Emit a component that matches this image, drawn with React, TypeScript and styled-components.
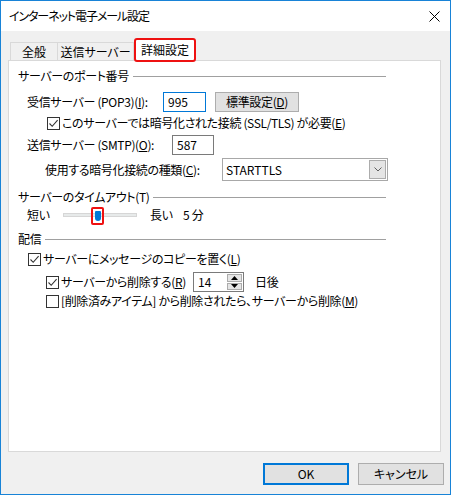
import React from "react";
import styled, { createGlobalStyle } from "styled-components";

const GlobalStyle = createGlobalStyle`
  html, body {
    margin: 0;
    padding: 0;
    background: #ffffff;
  }
  * {
    box-sizing: border-box;
  }
  body {
    font-family: "Noto Sans CJK JP", "Noto Sans", sans-serif;
    font-size: 12px;
    color: #000000;
    font-feature-settings: "palt";
    letter-spacing: -0.35px;
  }
`;

const CheckMark = () => (
  <svg width="11" height="11" viewBox="0 0 11 11">
    <path d="M1.5 5.5 L4.2 8.3 L9.6 2.2" fill="none" stroke="#333333" strokeWidth="1.1" />
  </svg>
);

const CloseIcon = () => (
  <svg width="11" height="11" viewBox="0 0 11 11">
    <path d="M0.5 0.5 L10.5 10.5 M10.5 0.5 L0.5 10.5" stroke="#000000" strokeWidth="1" />
  </svg>
);

const ChevronDown = () => (
  <svg width="8" height="5" viewBox="0 0 8 5">
    <path d="M0.5 0.5 L4 4 L7.5 0.5" fill="none" stroke="#606060" strokeWidth="1" />
  </svg>
);

const Arrow = ({ up }: { up?: boolean }) => (
  <svg width="7" height="4" viewBox="0 0 7 4">
    <path d={up ? "M0 4 L3.5 0 L7 4 Z" : "M0 0 L3.5 4 L7 0 Z"} fill="#000000" />
  </svg>
);

const App = () => {
  return (
    <>
      <GlobalStyle />
      <Window>
        <TitleBar>
          <TitleText>インターネット電子メール設定</TitleText>
          <CloseButton>
            <CloseIcon />
          </CloseButton>
        </TitleBar>
        <Body>
          <TabStrip>
            <Tab $w={48}>全般</Tab>
            <Tab $w={77}>送信サーバー</Tab>
            <ActiveTab>詳細設定</ActiveTab>
          </TabStrip>
          <Panel>
            <GroupHeader>
              <span>サーバーのポート番号</span>
              <HeaderLine />
            </GroupHeader>
            <Row $h={20} $mt={8} $indent={18}>
              <Label $w={136}>
                受信サーバー (POP3)(<u>I</u>):
              </Label>
              <TextBox $w={43} $focused>
                995
              </TextBox>
              <PushButton>
                標準設定(<u>D</u>)
              </PushButton>
            </Row>
            <Row $h={16} $mt={3} $indent={38}>
              <CheckBox>
                <CheckMark />
              </CheckBox>
              <CheckText>
                このサーバーでは暗号化された接続 (SSL/TLS) が必要(<u>E</u>)
              </CheckText>
            </Row>
            <Row $h={20} $mt={4} $indent={18}>
              <Label $w={145}>
                送信サーバー (SMTP)(<u>O</u>):
              </Label>
              <TextBox $w={42}>587</TextBox>
            </Row>
            <Row $h={23} $mt={3} $indent={36}>
              <Label $w={177}>
                使用する暗号化接続の種類(<u>C</u>):
              </Label>
              <Select>
                <SelectValue>STARTTLS</SelectValue>
                <DropButton>
                  <ChevronDown />
                </DropButton>
              </Select>
            </Row>

            <GroupHeader $mt={8}>
              <span>サーバーのタイムアウト(T)</span>
              <HeaderLine />
            </GroupHeader>
            <Row $h={20} $indent={18}>
              <Label $w={36}>短い</Label>
              <Slider>
                <Track />
                <ThumbHighlight>
                  <Thumb />
                </ThumbHighlight>
              </Slider>
              <Label $w={33} $ml={13}>
                長い
              </Label>
              <span>5 分</span>
            </Row>

            <GroupHeader $mt={6}>
              <span>配信</span>
              <HeaderLine />
            </GroupHeader>
            <Row $h={16} $mt={4} $indent={19}>
              <CheckBox>
                <CheckMark />
              </CheckBox>
              <CheckText>
                サーバーにメッセージのコピーを置く(<u>L</u>)
              </CheckText>
            </Row>
            <Row $h={20} $mt={5} $indent={37}>
              <CheckBox>
                <CheckMark />
              </CheckBox>
              <CheckText $w={132}>
                サーバーから削除する(<u>R</u>)
              </CheckText>
              <SpinBox>
                <SpinValue>14</SpinValue>
                <SpinButtons>
                  <SpinButton>
                    <Arrow up />
                  </SpinButton>
                  <SpinButton>
                    <Arrow />
                  </SpinButton>
                </SpinButtons>
              </SpinBox>
              <Label $ml={11}>日後</Label>
            </Row>
            <Row $h={16} $mt={1} $indent={37}>
              <CheckBox />
              <CheckText>
                [削除済みアイテム] から削除されたら、サーバーから削除(<u>M</u>)
              </CheckText>
            </Row>
          </Panel>
          <Footer>
            <DialogButton $default>OK</DialogButton>
            <DialogButton>キャンセル</DialogButton>
          </Footer>
        </Body>
      </Window>
    </>
  );
};

export default App;

const Window = styled.div`
  width: 451px;
  height: 495px;
  border: 1px solid #1883d7;
  display: flex;
  flex-direction: column;
  background: #f0f0f0;
`;
const TitleBar = styled.div`
  height: 30px;
  flex-shrink: 0;
  display: flex;
  align-items: center;
  justify-content: space-between;
  padding-left: 8px;
  background: #ffffff;
`;
const TitleText = styled.div`
  font-size: 12px;
  line-height: 16px;
  letter-spacing: -1.1px;
`;
const CloseButton = styled.div`
  width: 32px;
  height: 30px;
  display: flex;
  align-items: center;
  justify-content: center;
`;
const Body = styled.div`
  flex: 1;
  display: flex;
  flex-direction: column;
  padding-top: 7px;
`;
const TabStrip = styled.div`
  height: 22px;
  display: flex;
  align-items: flex-end;
  margin-left: 9px;
`;
const Tab = styled.div<{ $w: number }>`
  width: ${(p) => p.$w}px;
  height: 18px;
  display: flex;
  align-items: center;
  justify-content: center;
  border: 1px solid #d9d9d9;
  border-bottom: none;
  margin-right: -1px;
  background: #f0f0f0;
  line-height: 16px;
  letter-spacing: 0;
`;
const ActiveTab = styled.div`
  position: relative;
  z-index: 1;
  width: 62px;
  height: 24px;
  margin-left: 1px;
  margin-bottom: -2px;
  display: flex;
  align-items: center;
  justify-content: center;
  padding-bottom: 1px;
  border: 2px solid #ee1111;
  border-radius: 3px;
  background: #ffffff;
  line-height: 16px;
  letter-spacing: 0;
`;
const Panel = styled.div`
  width: 433px;
  height: 392px;
  margin-left: 7px;
  padding-top: 7px;
  background: #ffffff;
  border: 1px solid #d9d9d9;
  display: flex;
  flex-direction: column;
`;
const GroupHeader = styled.div<{ $mt?: number }>`
  width: 377px;
  height: 16px;
  margin-top: ${(p) => p.$mt ?? 0}px;
  padding-left: 9px;
  display: flex;
  align-items: center;
  line-height: 16px;
  white-space: nowrap;
`;
const HeaderLine = styled.div`
  flex: 1;
  height: 1px;
  margin-left: 4px;
  background: #a0a0a0;
`;
const Row = styled.div<{ $h: number; $mt?: number; $indent: number }>`
  height: ${(p) => p.$h}px;
  margin-top: ${(p) => p.$mt ?? 0}px;
  padding-left: ${(p) => p.$indent}px;
  display: flex;
  align-items: center;
  line-height: 16px;
  white-space: nowrap;
`;
const Label = styled.span<{ $w?: number; $ml?: number }>`
  ${(p) => (p.$w ? `width: ${p.$w}px; flex-shrink: 0;` : "")}
  margin-left: ${(p) => p.$ml ?? 0}px;
`;
const TextBox = styled.div<{ $w: number; $focused?: boolean }>`
  width: ${(p) => p.$w}px;
  height: 20px;
  padding-left: 4px;
  display: flex;
  align-items: center;
  background: #ffffff;
  border: 1px solid ${(p) => (p.$focused ? "#0078d7" : "#7a7a7a")};
  letter-spacing: 0;
`;
const PushButton = styled.div`
  width: 84px;
  height: 20px;
  margin-left: 9px;
  display: flex;
  align-items: center;
  justify-content: center;
  background: #e1e1e1;
  border: 1px solid #adadad;
`;
const CheckBox = styled.div`
  width: 13px;
  height: 13px;
  flex-shrink: 0;
  display: flex;
  align-items: center;
  justify-content: center;
  background: #ffffff;
  border: 1px solid #333333;
`;
const CheckText = styled.span<{ $w?: number }>`
  margin-left: 2px;
  ${(p) => (p.$w ? `width: ${p.$w}px; flex-shrink: 0;` : "")}
`;
const Select = styled.div`
  width: 166px;
  height: 23px;
  display: flex;
  align-items: center;
  justify-content: space-between;
  padding: 0 1px 0 3px;
  background: #ffffff;
  border: 1px solid #a8a8a8;
  letter-spacing: 0;
`;
const SelectValue = styled.span`
  padding-top: 1px;
`;
const DropButton = styled.div`
  width: 17px;
  height: 19px;
  display: flex;
  align-items: center;
  justify-content: center;
  background: #e5e5e5;
  border: 1px solid #acacac;
`;
const Slider = styled.div`
  position: relative;
  width: 74px;
  height: 20px;
  display: flex;
  align-items: center;
`;
const Track = styled.div`
  width: 100%;
  height: 4px;
  background: #e7eaea;
  border: 1px solid #d6d6d6;
`;
const ThumbHighlight = styled.div`
  position: absolute;
  left: 28px;
  top: 2px;
  width: 13px;
  height: 18px;
  display: flex;
  align-items: center;
  justify-content: center;
  border: 2px solid #ee1111;
  border-radius: 2px;
`;
const Thumb = styled.div`
  width: 6px;
  height: 10px;
  background: #0078d7;
  border-radius: 1px 1px 3px 3px;
`;
const SpinBox = styled.div`
  width: 51px;
  height: 20px;
  display: flex;
  align-items: stretch;
  justify-content: space-between;
  background: #ffffff;
  border: 1px solid #7a7a7a;
  letter-spacing: 0;
`;
const SpinValue = styled.span`
  display: flex;
  align-items: center;
  padding-left: 4px;
`;
const SpinButtons = styled.div`
  width: 16px;
  display: flex;
  flex-direction: column;
  padding: 1px 1px 1px 0;
  gap: 1px;
`;
const SpinButton = styled.div`
  flex: 1;
  display: flex;
  align-items: center;
  justify-content: center;
  background: #e5e5e5;
  border: 1px solid #acacac;
`;
const Footer = styled.div`
  display: flex;
  justify-content: flex-end;
  gap: 9px;
  margin-top: 11px;
  padding-right: 6px;
`;
const DialogButton = styled.div<{ $default?: boolean }>`
  width: 86px;
  height: 22px;
  display: flex;
  align-items: center;
  justify-content: center;
  background: #e1e1e1;
  border: ${(p) => (p.$default ? "2px solid #0078d7" : "1px solid #adadad")};
  line-height: 16px;
  letter-spacing: 0;
`;
